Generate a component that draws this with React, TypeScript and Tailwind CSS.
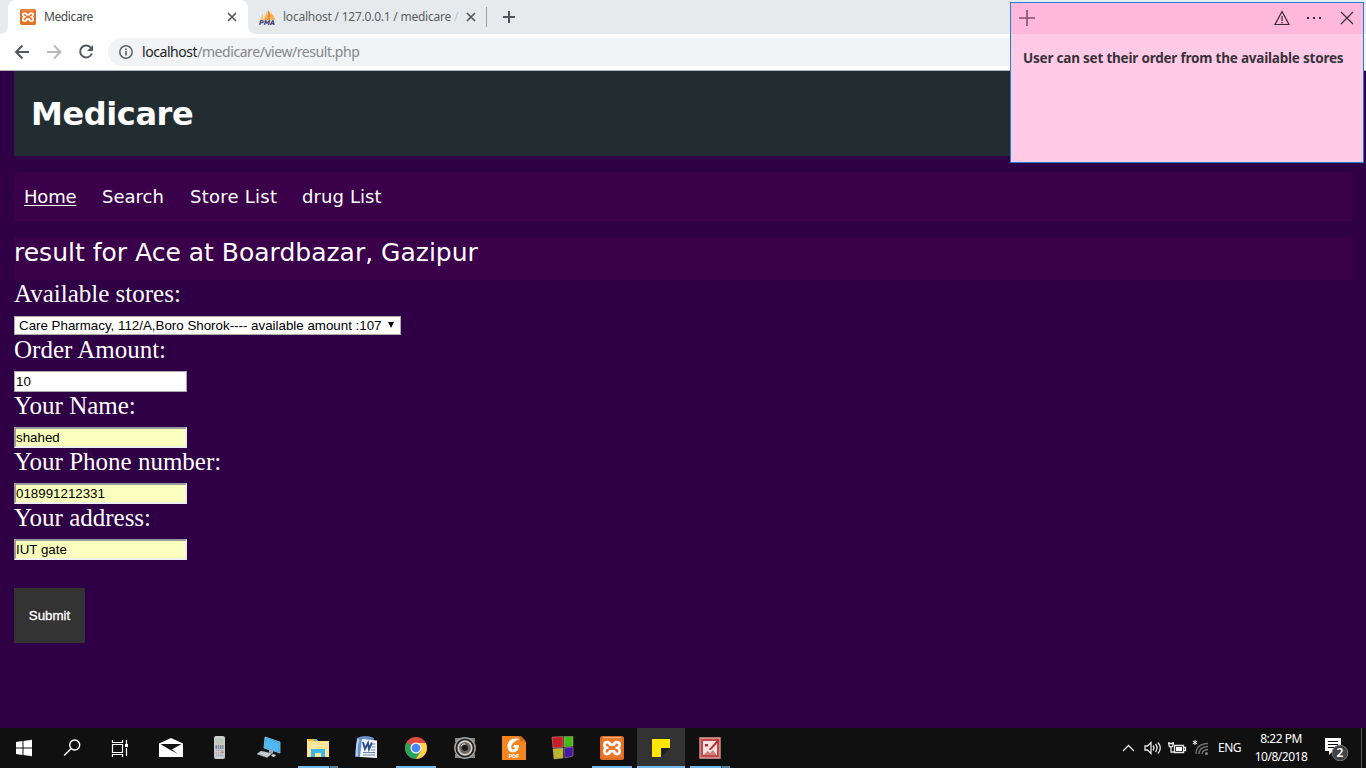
import React from "react";

const ui = "font-['Noto_Sans','Open_Sans',sans-serif]";

function XamppLogo({ size }: { size: number }) {
  return (
    <svg width={size} height={size} viewBox="0 0 24 24" className="shrink-0">
      <rect width="24" height="24" rx="2.5" fill="#e8762b" />
      <rect x="1" y="1" width="22" height="22" rx="2" fill="none" stroke="#c75f1b" strokeWidth=".6" />
      <path d="M3 1.700h18" stroke="#f7b98c" strokeWidth="1" />
      <path d="M8.500 11.800C5 11.800 4.300 10.500 4.300 8.700 4.300 5.500 9.800 5 9.800 8.500h4.400C14.200 5 19.700 5.500 19.700 8.700c0 1.800-1 2.400-2 3.100 1 .7 2 1.700 2 3.500 0 3.600-5.500 3.600-5.500 0H9.800c0 3.600-5.500 3.600-5.500 0 0-1.800 1-2.800 2-3.500" fill="none" stroke="#fff" strokeWidth="2.600" strokeLinejoin="round" />
      <path d="M15.500 11.800h2.500" stroke="#fff" strokeWidth="2.200" />
    </svg>
  );
}

function CloseX() {
  return (
    <svg width="10" height="10" viewBox="0 0 10 10" className="shrink-0">
      <path d="M1 1l8 8M9 1L1 9" stroke="#54585c" strokeWidth="1.700" />
    </svg>
  );
}

function TabStrip() {
  return (
    <div className={`flex h-[34px] w-full bg-[#e7eaed] ${ui} text-[12px] text-[#45494d]`}>
      <div className="flex w-2 bg-white"><div className="w-2 rounded-br-[8px] bg-[#e7eaed]" /></div>
      <div className="flex w-[240px] items-center rounded-t-[8px] bg-white pl-3 pr-[11px]">
        <XamppLogo size={16} />
        <span className="ml-2 flex-1 tracking-[-0.4px]">Medicare</span>
        <CloseX />
      </div>
      <div className="flex flex-1 bg-white">
        <div className="flex flex-1 items-center rounded-bl-[8px] bg-[#e7eaed] pl-[11px]">
          <svg width="17" height="17" viewBox="0 0 17 17" className="shrink-0">
            <path d="M1 11L4 4v7z" fill="#fbc27a" />
            <path d="M4.500 11L8 2v9z" fill="#f9b14e" />
            <path d="M9 1q4 4 2 10H8z" fill="#f58a1e" />
            <path d="M12 4q4 4 4 7h-4z" fill="#f9ac55" />
            <text x="0" y="16" fontSize="6.500" fontWeight="bold" fontStyle="italic" fill="#34346a" fontFamily="DejaVu Sans" textLength="16">PMA</text>
          </svg>
          <span className="ml-[7px] w-[175px] whitespace-nowrap tracking-[-0.230px] text-[#5a5e62]">
            localhost / 127.0.0.1 / medicare <span className="text-[#bfc2c5]">/</span>
          </span>
          <div className="ml-[8px] flex"><CloseX /></div>
          <div className="ml-[10px] h-5 w-px bg-[#9da0a4]" />
          <svg width="12" height="12" viewBox="0 0 12 12" className="ml-4">
            <path d="M6 0v12M0 6h12" stroke="#505458" strokeWidth="2" />
          </svg>
        </div>
      </div>
    </div>
  );
}

function Toolbar() {
  return (
    <div className="flex h-[37px] w-full items-center border-b border-[#b0b2b3] bg-white pl-[14px]">
      <svg width="84" height="18" viewBox="0 0 84 18" className="shrink-0" fill="none" strokeWidth="2">
        <path d="M15 9H2.500M8.500 2.500L2 9l6.500 6.500" stroke="#55595d" />
        <path d="M33 9h12.500M40 2.500L46.500 9 40 15.500" stroke="#b8babc" />
        <path d="M77 5A6 6 0 1 0 77.800 10.500" stroke="#55595d" />
        <path d="M79 2v6h-6z" fill="#55595d" />
      </svg>
      <div className={`ml-[10px] flex h-7 flex-1 items-center rounded-l-full bg-[#f1f3f4] pl-[11px] ${ui} text-[14px] text-[#84888c]`}>
        <svg width="14" height="14" viewBox="0 0 14 14" className="mr-[9px] shrink-0">
          <circle cx="7" cy="7" r="6.200" fill="none" stroke="#5f6368" strokeWidth="1.500" />
          <path d="M7 6v4.500M7 3.500V5" stroke="#5f6368" strokeWidth="1.600" />
        </svg>
        <span className="-mt-px tracking-[-0.440px]"><span className="text-[#202124]">localhost</span>/medicare/view/result.php</span>
      </div>
    </div>
  );
}

function StickyNote() {
  return (
    <div className="absolute left-[1010px] top-[2px] h-[161px] w-[354px] border border-[#1883d7] bg-[#fecae5]">
      <div className="flex h-[31px] items-center bg-[#ffb7dc] pl-2 pr-[9px]">
        <svg width="16" height="16" viewBox="0 0 16 16" className="-mt-px"><path d="M8 0v16M0 8h16" stroke="#80506b" strokeWidth="1.600" /></svg>
        <div className="flex-1" />
        <svg width="16" height="16" viewBox="0 0 16 16" fill="none" stroke="#392e35" strokeWidth="1.200" className="-mt-[2px]">
          <path d="M8 1.500L1 14.500h14zM8 6v5M8 12v1.500" />
        </svg>
        <svg width="16" height="4" viewBox="0 0 16 4" className="-mt-px ml-4" fill="#392e35"><path d="M1 1h2v2H1zM7 1h2v2H7zM13 1h2v2h-2z" /></svg>
        <svg width="14" height="14" viewBox="0 0 14 14" className="-mt-px ml-[18px]"><path d="M1 1l12 12M13 1L1 13" stroke="#392e35" strokeWidth="1.200" /></svg>
      </div>
      <p className={`whitespace-nowrap pl-3 pt-[14px] ${ui} text-[13.500px] font-bold leading-5 tracking-[-0.210px] text-[#38323a]`}>
        User can set their order from the available stores
      </p>
    </div>
  );
}

function Field({ label, value, filled }: { label: string; value: string; filled?: boolean }) {
  return (
    <div className="h-14">
      <div className="h-[35px] font-['Liberation_Serif',serif] text-[25px] leading-7 text-white">{label}</div>
      <div className={filled
        ? "h-[21px] w-[173px] border-2 border-b-[#eeeeee] border-l-[#9a9a9a] border-r-[#eeeeee] border-t-[#9a9a9a] bg-[#faffbd] text-[13.333px] leading-[17px] text-black"
        : "h-[21px] w-[173px] border border-[#a9a9a9] bg-white pl-px text-[13.333px] leading-[19px] text-black"}>{value}</div>
    </div>
  );
}

function Page() {
  return (
    <main className="h-[657px] bg-[#2f0045] pl-[14px] pr-[14px] font-['Liberation_Sans',sans-serif]">
      <header className="flex h-[85px] items-center bg-[#222d32] pl-[17px]">
        <h1 className="font-['DejaVu_Sans',sans-serif] text-[32px] font-bold tracking-[-0.400px] text-white">Medicare</h1>
      </header>
      <nav className="mt-4 flex h-[49px] items-center bg-[#3b004a] pl-[10px] font-['DejaVu_Sans',sans-serif] text-[18px] text-white">
        <a className="w-[78px] tracking-[-0.200px] underline decoration-1 underline-offset-2">Home</a>
        <a className="w-[88px] tracking-[0.020px]">Search</a>
        <a className="w-[112px] whitespace-nowrap tracking-[0.250px]">Store List</a>
        <a className="whitespace-nowrap tracking-[0.100px]">drug List</a>
      </nav>
      <h2 className="mt-4 h-[43px] bg-[#3b004a] font-['DejaVu_Sans',sans-serif] text-[25px] leading-[31px] text-white">result for Ace at Boardbazar, Gazipur</h2>
      <div className="h-14">
        <div className="h-9 font-['Liberation_Serif',serif] text-[25px] leading-7 text-white">Available stores:</div>
        <div className="flex h-[19px] w-[387px] items-center border border-[#a9a9a9] bg-white pl-1 text-[13.333px] text-black">
          <span className="whitespace-nowrap">Care Pharmacy, 112/A,Boro Shorok---- available amount :107</span>
          <svg width="6" height="6" viewBox="0 0 7 7" className="-mt-px ml-auto mr-[6px]"><path d="M0 0h7L3.500 7z" /></svg>
        </div>
      </div>
      <Field label="Order Amount:" value="10" />
      <Field label="Your Name:" value="shahed" filled />
      <Field label="Your Phone number:" value="018991212331" filled />
      <Field label="Your address:" value="IUT gate" filled />
      <button className="mt-7 block h-[55px] w-[71px] bg-[#333333] text-[13.333px] text-white [-webkit-text-stroke:0.300px_white]">Submit</button>
    </main>
  );
}

const icons: Record<string, React.ReactNode> = {
  windows: <path d="M4 6l6.500-1v6.500H4zM11.500 4.900L20 3.700v7.800h-8.500zM4 12.500h6.500V19L4 18zM11.500 12.500H20v7.800l-8.500-1.200z" fill="#fff" />,
  search: <g fill="none" stroke="#fff" strokeWidth="1.400"><circle cx="14.700" cy="9" r="5" /><path d="M11 12.700L4.200 19.500" /></g>,
  tasks: <g fill="none" stroke="#fff" strokeWidth="1.200"><path d="M4.500 8.500h10v8h-10zM4.500 4v2.500h10V4M4.500 21v-2.500h10V21M18.500 4v4M18.500 12v8" /><path d="M17 8h3v3h-3z" fill="#fff" stroke="none" /></g>,
  mail: <g><path d="M0 7.500L12 2l12 5.500V21H0z" fill="#fff" /><path d="M1.500 8h21l-9.500 5.500 6 4.500L9.500 13z" fill="#111" /></g>,
  calc: <g><rect x="6" y="0" width="11" height="23" rx="2" fill="#c9cccf" /><rect x="7.500" y="3" width="8" height="4.500" fill="#b7ccb3" /><path d="M7.500 10h8M7.500 12h8" stroke="#66708a" strokeWidth="1.300" strokeDasharray="1.500 .7" /><path d="M7.500 14.500h8M7.500 17h8M7.500 19.500h8" stroke="#989fa8" strokeDasharray="1.500 .8" /><path d="M13.500 15.500h2v1.500h-2z" fill="#df7543" /></g>,
  computer: <g><path d="M8 1l15 5v11L7 12z" fill="#2a9be4" stroke="#a9dcf4" strokeWidth=".7" /><path d="M8.500 2l13.500 5-.5 8.500-13.500-4z" fill="#4fb8f8" /><path d="M12 13.500l4 1.300v2.700l-4-1z" fill="#a6abb0" /><path d="M4 15l11 2.500-5 4L0 18z" fill="#dae0e5" stroke="#88949d" strokeWidth=".6" /><path d="M3 16l9 2.500M2 17.500l8 2.500" stroke="#9ba3a9" strokeWidth=".6" /><path d="M16 18l3 1-2 2-3-1z" fill="#dae0e5" /></g>,
  folder: <g><path d="M1 3h9l2 2h11v16H1z" fill="#ffdf83" /><path d="M2 3h7v2H2z" fill="#f7b924" /><path d="M8 3h3v2H8z" fill="#5bb5da" /><path d="M1.500 6h21v14h-21z" fill="#ffe59a" /><path d="M5 21v-8h14v8h-4v-4H9v4z" fill="#39b7e9" /></g>,
  word: <g><path d="M2 2q8-4 17 0l-4 19H0z" fill="#6890c9" /><path d="M3.500 3Q1 11 2 20" stroke="#b9d2f3" strokeWidth="2" fill="none" /><path d="M7 3l15 1.500V22L5 21z" fill="#f4f7fc" /><path d="M8 6l2 7 3-6 1 6 3-6.500" stroke="#284d95" strokeWidth="1.900" fill="none" /><path d="M17 8h3.500M17 11h3.500M16 14h4.500M8 16.500h12M8 19h12" stroke="#6788bd" strokeWidth="1.200" /></g>,
  chrome: <g><circle cx="12" cy="12" r="11" fill="#e04b3f" /><path d="M12 12L2.500 6.500A11 11 0 0 0 12 23l5-8z" fill="#27a35c" /><path d="M12 7h9.800A11 11 0 0 1 12 23l5-8z" fill="#ffd34c" /><circle cx="12" cy="12" r="5.500" fill="#f2f5f7" /><circle cx="12" cy="12" r="4.300" fill="#4687f4" /></g>,
  speaker: <g><path d="M2 2h5v4H2zM17 2h5v4h-5zM2 18h5v4H2zM17 18h5v4h-5z" fill="#858585" /><circle cx="12" cy="12" r="10.200" fill="#202020" stroke="#a4a4a4" strokeWidth="1.500" /><circle cx="12" cy="12" r="6.800" fill="#716861" stroke="#d0ceca" strokeWidth="1.700" /><circle cx="12" cy="12" r="3" fill="#191919" /><path d="M8 10q2-3 4-2" stroke="#ddd" fill="none" /></g>,
  foxit: <g><path d="M0 0h17l7 6v18H0z" fill="#f7851d" /><path d="M18 0h1l5 5h-6z" fill="#c96c1f" /><path d="M18 3Q7 1 5.500 9q-.5 7 5.500 7.500 6-.5 6-7.500h-5l-1 2.500h2.500q-1 2.500-3 2-2-.5-1-4Q11 5 18 3z" fill="#fff" /><text x="6.500" y="22" fill="#fff" fontSize="5" fontFamily="DejaVu Sans" fontWeight="bold" textLength="11">PDF</text></g>,
  blocks: <g stroke="#cfc8a3" strokeWidth=".4"><path d="M1 1l11-.5V11L2 12z" fill="#c91e29" /><path d="M13 .5h9V10l-9 1z" fill="#44b81d" /><path d="M2 13l10-1v10L3 23z" fill="#bcb52e" /><path d="M13 12l9-1v9l-8 2z" fill="#4417a9" /></g>,
  note: <g><path d="M3 3h18v9h-9v9H3z" fill="#ffe600" /><path d="M12 12h9l-9 9z" fill="#1f1f1f" /></g>,
  red: <g><path d="M2 2h20v20H2z" fill="#c0484a" stroke="#e0a0a0" strokeWidth="1.300" /><path d="M5 5h14v14H5z" fill="#f2e5e3" /><path d="M7 8h3v2.500H7z" fill="#b53131" /><path d="M5.500 19l4-4 2.500 2 3-3 3.500 5z" fill="#d37b79" /><path d="M11.500 12.500q1 1 2-.5l7-8" fill="none" stroke="#b53131" strokeWidth="2" /></g>,
};

function TaskIcon({ name, active, open, stack }: { name: string; active?: boolean; open?: boolean; stack?: boolean }) {
  return (
    <div className={active ? "flex h-10 w-12 flex-col items-center bg-[#333333]" : "flex h-10 w-12 flex-col items-center"}>
      <div className="flex h-[38px] w-full items-center justify-center pt-[2px]">
        {name === "xampp" ? <XamppLogo size={24} /> : <svg width="24" height="24" viewBox="0 0 24 24">{icons[name]}</svg>}
      </div>
      {open && <div className={active ? "h-[2px] w-12 bg-[#76b9ed]" : "flex h-[2px] w-10 bg-[#76b9ed]"}>{stack && <div className="ml-auto w-[9px] border-l border-[#263d50] bg-[#5682a6]" />}</div>}
    </div>
  );
}

function Taskbar() {
  return (
    <footer className={`flex h-10 w-full bg-[#101010] text-white ${ui}`}>
      <TaskIcon name="windows" />
      <TaskIcon name="search" />
      <TaskIcon name="tasks" />
      <div className="ml-[3px] flex gap-px">
        <TaskIcon name="mail" /><TaskIcon name="calc" /><TaskIcon name="computer" />
        <TaskIcon name="folder" open stack /><TaskIcon name="word" /><TaskIcon name="chrome" open />
        <TaskIcon name="speaker" /><TaskIcon name="foxit" /><TaskIcon name="blocks" />
        <TaskIcon name="xampp" open /><TaskIcon name="note" active open /><TaskIcon name="red" open stack />
      </div>
      <div className="ml-auto flex h-10 items-center text-[12px]">
        <svg width="88" height="24" viewBox="0 0 88 24" fill="none" stroke="#e7e7e7" strokeWidth="1.300">
          <path d="M1 15l5.500-5.500L12 15" />
          <path d="M23 10h2.500l3.500-3.500v11L25.500 14H23zM31 9.500q2 2.500 0 5M33.500 8q3 4 0 8M36 6.500q4.500 5.500 0 11" />
          <path d="M52.500 9.500h9v7h-9zM62 11.500h1.500v3H62" /><path d="M54 11h6v4h-6z" fill="#fff" stroke="none" />
          <path d="M47 6v3q0 2 2 2t2-2V6M46 7.500h6M49 11v5h3" />
          <path d="M73 4v5M70.800 5.200l4.400 2.600M75.200 5.200l-4.400 2.600" stroke="#fff" strokeWidth="1" />
          <path d="M74 18Q74 8 86 7.500M77 18q0-7 9-7.500M80 18q0-4 6-4.500" stroke="#727272" />
          <circle cx="84.500" cy="17.500" r="1.500" fill="#828282" stroke="none" />
        </svg>
        <span className="ml-[8px] w-[24px] whitespace-nowrap tracking-[-0.500px]">ENG</span>
        <div className="ml-[12px] w-[54px] whitespace-nowrap text-center leading-[18px] tracking-[-0.480px]"><div>8:22 PM</div><div>10/8/2018</div></div>
        <svg width="26" height="26" viewBox="0 0 26 26" className="ml-[16px]">
          <path d="M1 3h16v13h-8l-4 4v-4H1z" fill="#fff" /><path d="M4 6.500h10M4 9.500h10M4 12.500h7" stroke="#111" />
          <circle cx="16" cy="18" r="7.800" fill="#424242" stroke="#777" />
          <text x="16" y="22" textAnchor="middle" fill="#fff" fontSize="12" fontWeight="600" fontFamily="Noto Sans">2</text>
        </svg>
        <div className="ml-[11px] mr-1 h-10 w-px bg-[#555]" />
      </div>
    </footer>
  );
}

export default function App() {
  return (
    <div className="relative h-[768px] w-[1366px] overflow-hidden bg-white">
      <TabStrip />
      <Toolbar />
      <Page />
      <Taskbar />
      <StickyNote />
    </div>
  );
}
